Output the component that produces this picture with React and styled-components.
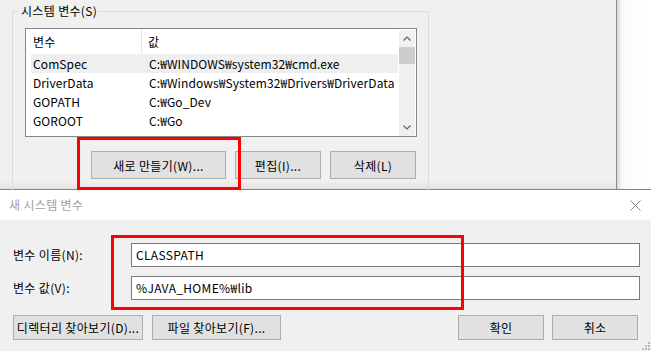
import React from "react";
import styled, { createGlobalStyle } from "styled-components";

const GlobalStyle = createGlobalStyle`
  html, body {
    margin: 0;
    padding: 0;
    background: #f0f0f0;
    overflow: hidden;
  }
  * {
    box-sizing: border-box;
  }
`;

const FONT = `"Noto Sans CJK KR", "Noto Sans", sans-serif`;

const Screen = styled.div`
  position: relative;
  width: 651px;
  height: 351px;
  overflow: hidden;
  background: #f0f0f0;
  font-family: ${FONT};
  font-size: 12px;
  letter-spacing: 0.33px;
  line-height: 16px;
  color: #000;
`;

/* ---------- back window (환경 변수) ---------- */

const BackWindow = styled.div`
  display: flex;
  height: 190px;
  border-bottom: 1px solid #858585;
`;

const BackPanel = styled.div`
  width: 617px;
  border-right: 1px solid #8c8c8c;
  background: linear-gradient(to bottom, #f0f0f0 181px, #e2e2e2 189px);
`;

const Desktop = styled.div`
  flex: 1;
  background: linear-gradient(to right, #d6d6d6 0px, #fbfbfb 5px, #ffffff 100%);
`;

const GroupBox = styled.fieldset`
  margin: 3px 0 0 12px;
  width: 417px;
  height: 190px;
  padding: 9px 0 0 6px;
  border: 1px solid #dcdcdc;
  border-bottom: none;
  min-width: 0;
`;

const GroupTitle = styled.legend`
  padding: 0 2px;
  line-height: 16px;
  font-size: 12px;
`;

const GroupContent = styled.div`
  margin-left: 6px;
`;

const ListBox = styled.div`
  display: flex;
  width: 392px;
  height: 109px;
  border: 1px solid #828790;
  background: #fff;
  overflow: hidden;
`;

const ListBody = styled.div`
  flex: 1;
  display: flex;
  flex-direction: column;
  overflow: hidden;
`;

const HeaderRow = styled.div`
  display: grid;
  grid-template-columns: 116px 1fr;
  height: 25px;
  flex-shrink: 0;
`;

const HeaderCell = styled.div`
  display: flex;
  align-items: center;
  padding-left: ${(p) => (p.$first ? "7px" : "6px")};
  border-right: ${(p) => (p.$first ? "1px solid #e5e5e5" : "none")};
  white-space: nowrap;
`;

const Row = styled.div`
  display: grid;
  grid-template-columns: 116px 1fr;
  height: 19px;
  flex-shrink: 0;
  margin: 0 1px 0 5px;
  background: ${(p) => (p.$selected ? "#efefef" : "transparent")};
`;

const Cell = styled.div`
  display: flex;
  align-items: center;
  padding-left: 2px;
  letter-spacing: 0.1px;
  white-space: nowrap;
  overflow: hidden;
`;

const ScrollBar = styled.div`
  width: 16px;
  margin: 1px 1px 0 0;
  background: #f0f0f0;
  display: flex;
  flex-direction: column;
  align-items: stretch;
`;

const ScrollArrow = styled.div`
  height: 17px;
  display: flex;
  align-items: center;
  justify-content: center;
`;

const ScrollThumb = styled.div`
  height: 17px;
  background: #cdcdcd;
`;

const ScrollTrack = styled.div`
  flex: 1;
`;

const ButtonRow = styled.div`
  display: flex;
  justify-content: ${(p) => (p.$split ? "space-between" : "flex-end")};
  gap: ${(p) => p.$gap || 9}px;
  width: ${(p) => (p.$width ? `${p.$width}px` : "auto")};
  margin-top: ${(p) => p.$top || 0}px;
`;

const ButtonGroup = styled.div`
  display: flex;
  gap: ${(p) => p.$gap}px;
`;

const Button = styled.button`
  width: ${(p) => p.$w}px;
  height: ${(p) => p.$h || 28}px;
  padding: 0;
  border: 1px solid #adadad;
  background: #e1e1e1;
  font-family: ${FONT};
  font-size: 12px;
  letter-spacing: 0.33px;
  color: #000;
  white-space: nowrap;
`;

/* ---------- dialog (새 시스템 변수) ---------- */

const Dialog = styled.div`
  height: 161px;
  display: flex;
  flex-direction: column;
  background: #f0f0f0;
`;

const TitleBar = styled.div`
  height: 30px;
  background: #fff;
  display: flex;
  align-items: center;
  justify-content: space-between;
  padding: 0 10px 0 9px;
  color: #a0a0a0;
`;

const DialogBody = styled.div`
  padding: 23px 12px 0 13px;
  display: flex;
  flex-direction: column;
`;

const Field = styled.div`
  display: grid;
  grid-template-columns: 118px 509px;
  align-items: center;
  margin-bottom: 9px;
`;

const Label = styled.label`
  white-space: nowrap;
`;

const TextInput = styled.div`
  height: 24px;
  border: 1px solid #7a7a7a;
  background: #fff;
  display: flex;
  align-items: center;
  padding-left: 4px;
`;

const Highlight = styled.div`
  position: absolute;
  left: ${(p) => p.$x}px;
  top: ${(p) => p.$y}px;
  width: ${(p) => p.$w}px;
  height: ${(p) => p.$h}px;
  border: 3px solid #ff0000;
  pointer-events: none;
  z-index: 5;
`;

const Grip = styled.svg`
  position: absolute;
  right: 1px;
  bottom: 1px;
`;

const vars = [
  ["ComSpec", "C:₩WINDOWS₩system32₩cmd.exe"],
  ["DriverData", "C:₩Windows₩System32₩Drivers₩DriverData"],
  ["GOPATH", "C:₩Go_Dev"],
  ["GOROOT", "C:₩Go"],
];

const Chevron = ({ up }) => (
  <svg width="8" height="5" viewBox="0 0 8 5">
    <path
      d={up ? "M0.5 4.5 L4 1 L7.5 4.5" : "M0.5 0.5 L4 4 L7.5 0.5"}
      fill="none"
      stroke="#606060"
      strokeWidth="1.2"
    />
  </svg>
);

export default function App() {
  return (
    <>
      <GlobalStyle />
      <Screen>
        <BackWindow>
          <BackPanel>
            <GroupBox>
              <GroupTitle>시스템 변수(S)</GroupTitle>
              <GroupContent>
                <ListBox>
                  <ListBody>
                    <HeaderRow>
                      <HeaderCell $first>변수</HeaderCell>
                      <HeaderCell>값</HeaderCell>
                    </HeaderRow>
                    {vars.map(([name, value], i) => (
                      <Row key={name} $selected={i === 0}>
                        <Cell>{name}</Cell>
                        <Cell>{value}</Cell>
                      </Row>
                    ))}
                  </ListBody>
                  <ScrollBar>
                    <ScrollArrow>
                      <Chevron up />
                    </ScrollArrow>
                    <ScrollThumb />
                    <ScrollTrack />
                    <ScrollArrow>
                      <Chevron />
                    </ScrollArrow>
                  </ScrollBar>
                </ListBox>
                <ButtonRow $width={391} $top={14}>
                  <Button $w={135}>새로 만들기(W)...</Button>
                  <Button $w={86}>편집(I)...</Button>
                  <Button $w={86}>삭제(L)</Button>
                </ButtonRow>
              </GroupContent>
            </GroupBox>
          </BackPanel>
          <Desktop />
        </BackWindow>

        <Dialog>
          <TitleBar>
            <span>새 시스템 변수</span>
            <svg width="11" height="11" viewBox="0 0 11 11">
              <path d="M0.5 0.5 L10.5 10.5 M10.5 0.5 L0.5 10.5" stroke="#8a8a8a" strokeWidth="1" />
            </svg>
          </TitleBar>
          <DialogBody>
            <Field>
              <Label>변수 이름(N):</Label>
              <TextInput>CLASSPATH</TextInput>
            </Field>
            <Field>
              <Label>변수 값(V):</Label>
              <TextInput>%JAVA_HOME%₩lib</TextInput>
            </Field>
            <ButtonRow $split $top={6} $width={625}>
              <ButtonGroup $gap={9}>
                <Button $w={130} $h={25}>디렉터리 찾아보기(D)...</Button>
                <Button $w={129} $h={25}>파일 찾아보기(F)...</Button>
              </ButtonGroup>
              <ButtonGroup $gap={8}>
                <Button $w={86} $h={25}>확인</Button>
                <Button $w={86} $h={25}>취소</Button>
              </ButtonGroup>
            </ButtonRow>
          </DialogBody>
        </Dialog>

        <Highlight $x={77} $y={137} $w={164} $h={53} />
        <Highlight $x={111} $y={235} $w={353} $h={75} />

        <Grip width="9" height="9" viewBox="0 0 9 9">
          {[
            [6, 0],
            [3, 3],
            [6, 3],
            [0, 6],
            [3, 6],
            [6, 6],
          ].map(([x, y]) => (
            <rect key={`${x}-${y}`} x={x + 1} y={y + 1} width="2" height="2" fill="#b8b8b8" />
          ))}
        </Grip>
      </Screen>
    </>
  );
}
